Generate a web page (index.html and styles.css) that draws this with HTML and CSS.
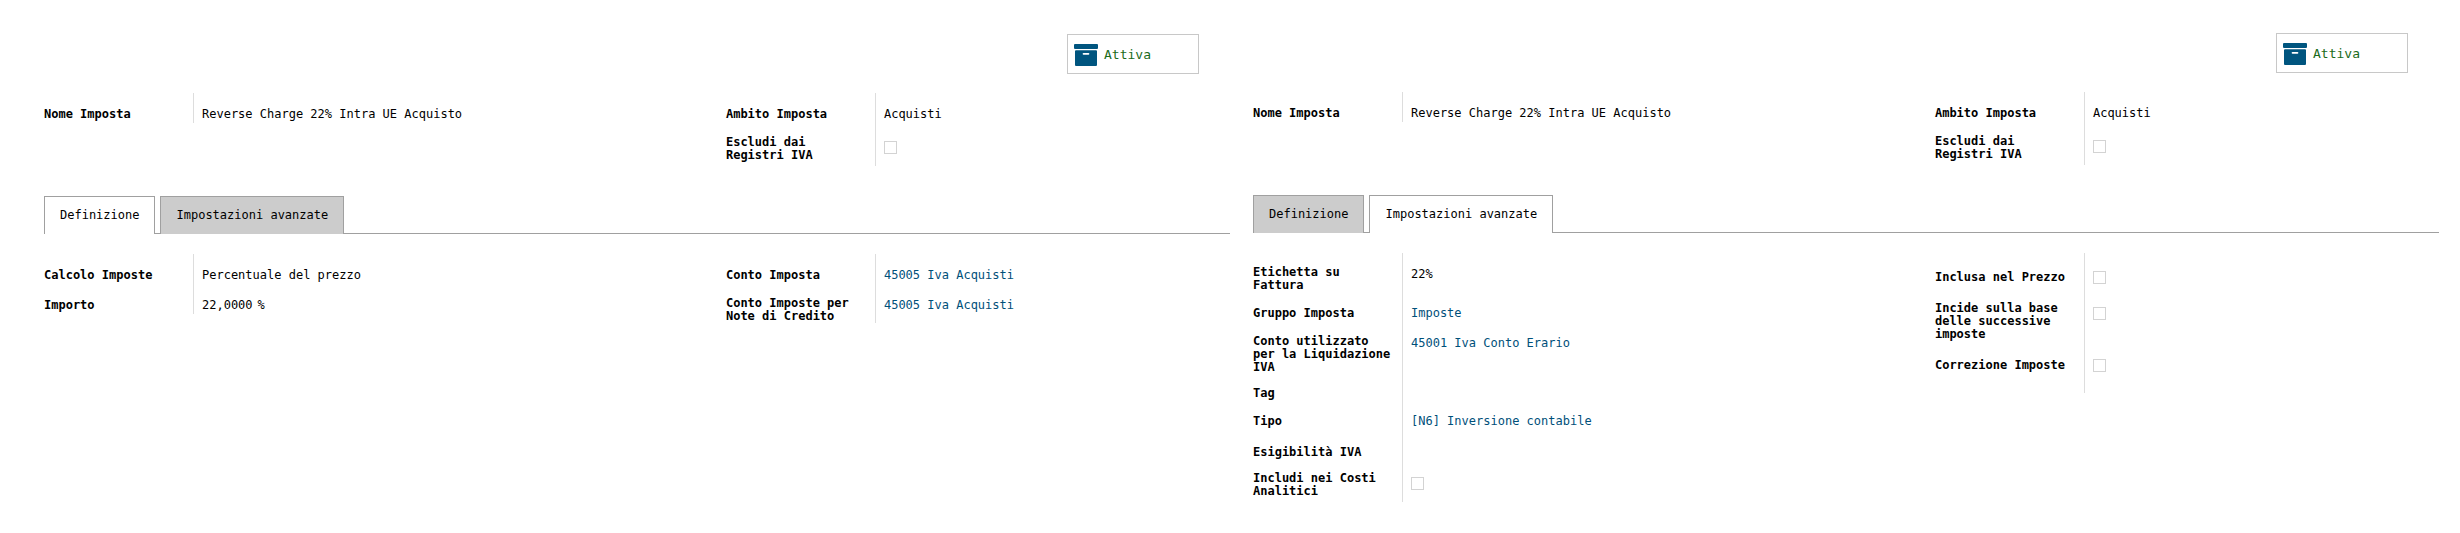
FILE: index.html
```html
<!DOCTYPE html>
<html lang="it">
<head>
<meta charset="utf-8">
<title>Imposte</title>
<link rel="stylesheet" href="styles.css">
</head>
<body>
<main class="page">
  <section class="sheet sheet-first">
    <div class="button-box">
      <button class="stat-button" type="button">
        <svg class="stat-icon" viewBox="0 0 24 22" aria-hidden="true"><path d="M1 0h22a1 1 0 0 1 1 1v3a1 1 0 0 1-1 1H1a1 1 0 0 1-1-1V1a1 1 0 0 1 1-1zM2 6.3h20a1 1 0 0 1 1 1V21a1 1 0 0 1-1 1H2a1 1 0 0 1-1-1V7.300a1 1 0 0 1 1-1zM9.500 9a.8.8 0 0 0 0 1.700h5a.8.8 0 0 0 0-1.700z" fill-rule="evenodd"/></svg>
        <span>Attiva</span>
      </button>
    </div>
    <div class="groups">
      <div class="group">
        <div class="row"><span class="label">Nome Imposta</span><div class="value"><span class="text">Reverse Charge 22% Intra UE Acquisto</span></div></div>
      </div>
      <div class="group">
        <div class="row"><span class="label">Ambito Imposta</span><div class="value"><span class="text">Acquisti</span></div></div>
        <div class="row row-end"><label class="label" for="escludi-a">Escludi dai Registri IVA</label><div class="value"><input class="check" type="checkbox" id="escludi-a"></div></div>
      </div>
    </div>
    <div class="tabs" role="tablist">
      <button class="tab tab-active" type="button" role="tab" aria-selected="true">Definizione</button>
      <button class="tab" type="button" role="tab" aria-selected="false">Impostazioni avanzate</button>
    </div>
    <div class="groups">
      <div class="group">
        <div class="row"><span class="label">Calcolo Imposte</span><div class="value"><span class="text">Percentuale del prezzo</span></div></div>
        <div class="row"><span class="label">Importo</span><div class="value"><span class="text amount"><span>22,0000</span><span>%</span></span></div></div>
      </div>
      <div class="group">
        <div class="row"><span class="label">Conto Imposta</span><div class="value"><a class="text link" href="#">45005 Iva Acquisti</a></div></div>
        <div class="row"><span class="label">Conto Imposte per Note di Credito</span><div class="value"><a class="text link" href="#">45005 Iva Acquisti</a></div></div>
      </div>
    </div>
  </section>

  <section class="sheet">
    <div class="button-box">
      <button class="stat-button" type="button">
        <svg class="stat-icon" viewBox="0 0 24 22" aria-hidden="true"><path d="M1 0h22a1 1 0 0 1 1 1v3a1 1 0 0 1-1 1H1a1 1 0 0 1-1-1V1a1 1 0 0 1 1-1zM2 6.3h20a1 1 0 0 1 1 1V21a1 1 0 0 1-1 1H2a1 1 0 0 1-1-1V7.300a1 1 0 0 1 1-1zM9.500 9a.8.8 0 0 0 0 1.700h5a.8.8 0 0 0 0-1.700z" fill-rule="evenodd"/></svg>
        <span>Attiva</span>
      </button>
    </div>
    <div class="groups">
      <div class="group">
        <div class="row"><span class="label">Nome Imposta</span><div class="value"><span class="text">Reverse Charge 22% Intra UE Acquisto</span></div></div>
      </div>
      <div class="group">
        <div class="row"><span class="label">Ambito Imposta</span><div class="value"><span class="text">Acquisti</span></div></div>
        <div class="row row-end"><label class="label" for="escludi-b">Escludi dai Registri IVA</label><div class="value"><input class="check" type="checkbox" id="escludi-b"></div></div>
      </div>
    </div>
    <div class="tabs" role="tablist">
      <button class="tab" type="button" role="tab" aria-selected="false">Definizione</button>
      <button class="tab tab-active" type="button" role="tab" aria-selected="true">Impostazioni avanzate</button>
    </div>
    <div class="groups">
      <div class="group">
        <div class="row"><span class="label">Etichetta su Fattura</span><div class="value"><span class="text">22%</span></div></div>
        <div class="row"><span class="label">Gruppo Imposta</span><div class="value"><a class="text link" href="#">Imposte</a></div></div>
        <div class="row"><span class="label">Conto utilizzato per la Liquidazione IVA</span><div class="value"><a class="text link" href="#">45001 Iva Conto Erario</a></div></div>
        <div class="row"><span class="label">Tag</span><div class="value"></div></div>
        <div class="row row-tall"><span class="label">Tipo</span><div class="value"><a class="text link" href="#">[N6] Inversione contabile</a></div></div>
        <div class="row"><span class="label">Esigibilità IVA</span><div class="value"></div></div>
        <div class="row row-end"><label class="label" for="analitici">Includi nei Costi Analitici</label><div class="value"><input class="check" type="checkbox" id="analitici"></div></div>
      </div>
      <div class="group">
        <div class="row"><label class="label" for="inclusa">Inclusa nel Prezzo</label><div class="value"><input class="check" type="checkbox" id="inclusa"></div></div>
        <div class="row"><label class="label" for="incide">Incide sulla base delle successive imposte</label><div class="value"><input class="check" type="checkbox" id="incide"></div></div>
        <div class="row row-last"><label class="label" for="correzione">Correzione Imposte</label><div class="value"><input class="check" type="checkbox" id="correzione"></div></div>
      </div>
    </div>
  </section>
</main>
</body>
</html>
```
FILE: styles.css
```css
* {
  box-sizing: border-box;
}

body {
  margin: 0;
  background: #fff;
  color: #000;
  font: 12px/13px "DejaVu Sans Mono", monospace;
}

.page {
  display: grid;
  grid-template-columns: repeat(2, minmax(0, 1fr));
  gap: 23px;
  padding: 33px 21px 31px 44px;
}

.sheet-first {
  padding-top: 1px;
}

.button-box {
  display: flex;
  justify-content: flex-end;
  padding-right: 31px;
  margin-bottom: 19px;
}

.stat-button {
  display: flex;
  align-items: center;
  gap: 6px;
  width: 132px;
  height: 40px;
  padding: 2px 6px 0;
  border: 1px solid #c8c8c8;
  background: #fff;
  color: #1a6b1a;
  font: 13px/16px "DejaVu Sans Mono", monospace;
}

.stat-icon {
  width: 24px;
  height: 22px;
  fill: #00557f;
}

.groups {
  display: grid;
  grid-template-columns: minmax(0, 23fr) minmax(0, 17fr);
  align-items: start;
}

.row {
  display: grid;
  grid-template-columns: 149px minmax(0, 1fr);
}

.label {
  align-self: center;
  padding: 13px 8px 0 0;
  font-weight: bold;
}

.value {
  padding: 13px 0 0 8px;
  border-left: 1px solid #ddd;
}

.text {
  display: block;
  line-height: 17px;
}

.amount {
  display: flex;
  gap: 5px;
}

.link {
  color: #00507a;
  text-decoration: none;
}

.check {
  display: block;
  appearance: none;
  width: 13px;
  height: 13px;
  margin: 5px 0;
  border: 1px solid #d3d3d3;
  background: #fff;
}

.row-end .label {
  align-self: start;
}

.row-end .label,
.row-end .value {
  padding-bottom: 4px;
}

.row-tall .label {
  align-self: start;
  padding-top: 15px;
}

.row-tall .value {
  padding-bottom: 3px;
}

.row-last .label {
  align-self: start;
  padding-top: 18px;
}

.row-last .value {
  padding-bottom: 16px;
}

.tabs {
  display: flex;
  gap: 5px;
  margin: 30px 0 20px;
  border-bottom: 1px solid #a0a0a0;
}

.tab {
  height: 38px;
  margin-bottom: -1px;
  padding: 0 15px;
  border: 1px solid #a0a0a0;
  border-bottom: 0;
  background: #ccc;
  color: #000;
  font: inherit;
}

.tab-active {
  background: #fff;
}
```
